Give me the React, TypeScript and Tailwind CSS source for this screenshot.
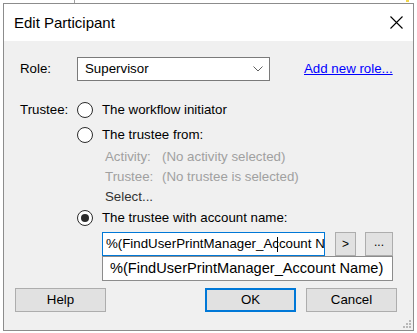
import React from 'react';

function Radio({ checked = false }: { checked?: boolean }) {
  return (
    <span className="w-[16px] h-[16px] rounded-full border-[1.5px] border-[#2b2b2b] bg-white flex items-center justify-center shrink-0">
      {checked && <span className="w-[8px] h-[8px] rounded-full bg-[#2b2b2b]" />}
    </span>
  );
}

function Button({ label, primary = false, className = '' }: { label: string; primary?: boolean; className?: string }) {
  return (
    <div
      className={
        'h-[24px] flex items-center justify-center bg-[#e1e1e1] ' +
        (primary ? 'border-2 border-[#0078d7] ' : 'border border-[#adadad] ') +
        className
      }
    >
      {label}
    </div>
  );
}

export default function App() {
  return (
    <div className="relative w-[417px] h-[333px] overflow-hidden bg-white font-['Liberation_Sans',Arial,sans-serif] text-[13.3px] text-black">
      {/* bits of the window behind */}
      <div className="absolute left-[74px] top-0 w-px h-[3px] bg-[#a0a0a0]" />
      <div className="absolute left-[406px] top-0 w-[3px] h-[2px] bg-[#f2d64b]" />

      <div className="ml-[3px] mt-[3px] w-[411px] h-[328px] border border-[#8c8c8c] bg-[#f0f0f0] flex flex-col relative">
        <div className="h-[37px] bg-white flex items-center justify-between pl-[10px] pr-[2px]">
          <span className="text-[15px] leading-none">Edit Participant</span>
          <div className="w-[30px] h-[30px] flex items-center justify-center">
            <svg width="13" height="13" viewBox="0 0 13 13">
              <path d="M0.5 0.5 L12.5 12.5 M12.5 0.5 L0.5 12.5" stroke="#000" strokeWidth="1.1" />
            </svg>
          </div>
        </div>

        <div className="flex flex-col">
          <div className="mt-[16px] h-[24px] pl-[16px] flex items-center">
            <span className="w-[57px]">Role:</span>
            <div className="w-[193px] h-[24px] border border-[#7a7a7a] bg-white flex items-center justify-between pl-[7px] pr-[6px]">
              <span>Supervisor</span>
              <svg width="10" height="6" viewBox="0 0 10 6">
                <path d="M0.5 0.5 L5 5 L9.5 0.5" fill="none" stroke="#606060" strokeWidth="1" />
              </svg>
            </div>
            <span className="ml-[34px] text-[#0000ff] underline">Add new role...</span>
          </div>

          <div className="mt-[16px] h-[25px] pl-[16px] flex items-center">
            <span className="w-[57px]">Trustee:</span>
            <Radio />
            <span className="ml-[9px]">The workflow initiator</span>
          </div>
          <div className="h-[25px] pl-[73px] flex items-center">
            <Radio />
            <span className="ml-[9px]">The trustee from:</span>
          </div>
          <div className="h-[20px] pl-[101px] flex items-center text-[#a0a0a0]">
            <span className="w-[57px]">Activity:</span>
            <span>(No activity selected)</span>
          </div>
          <div className="h-[19px] pl-[101px] flex items-center text-[#a0a0a0]">
            <span className="w-[57px]">Trustee:</span>
            <span>(No trustee is selected)</span>
          </div>
          <div className="h-[21px] pl-[101px] flex items-center text-[#333333]">Select...</div>
          <div className="h-[21px] pl-[73px] flex items-center">
            <Radio checked />
            <span className="ml-[9px]">The trustee with account name:</span>
          </div>

          <div className="mt-[4px] h-[24px] pl-[98px] flex items-center relative">
            <div className="relative w-[223px] h-[24px] border border-[#0078d7] bg-white flex items-center pl-[3px] overflow-hidden whitespace-nowrap">
              <span>%(FindUserPrintManager_Account N</span>
              <span className="absolute left-[174px] top-[4px] w-px h-[15px] bg-black" />
            </div>
            <Button label=">" className="ml-[10px] w-[21px] h-[23px] text-[12px]" />
            <Button label="..." className="ml-[9px] w-[28px] h-[23px] text-[12px] items-end pb-[4px]" />
            <div className="absolute left-[98px] top-[24px] w-[291px] h-[25px] border border-[#8c8c8c] bg-white flex items-center pl-[7px] text-[14.6px] whitespace-nowrap z-10">
              %(FindUserPrintManager_Account Name)
            </div>
          </div>

          <div className="mt-[32px] pl-[11px] pr-[16px] flex items-center">
            <Button label="Help" className="w-[91px]" />
            <div className="flex-1" />
            <Button label="OK" primary className="w-[91px]" />
            <Button label="Cancel" className="ml-[10px] w-[91px]" />
          </div>
        </div>

        {/* resize grip */}
        <svg className="absolute right-[2px] bottom-[2px]" width="8" height="8" viewBox="0 0 8 8">
          <rect x="6" y="0" width="2" height="2" fill="#b8b8b8" />
          <rect x="3" y="3" width="2" height="2" fill="#b8b8b8" />
          <rect x="6" y="3" width="2" height="2" fill="#b8b8b8" />
          <rect x="0" y="6" width="2" height="2" fill="#b8b8b8" />
          <rect x="3" y="6" width="2" height="2" fill="#b8b8b8" />
          <rect x="6" y="6" width="2" height="2" fill="#b8b8b8" />
        </svg>
      </div>
    </div>
  );
}
